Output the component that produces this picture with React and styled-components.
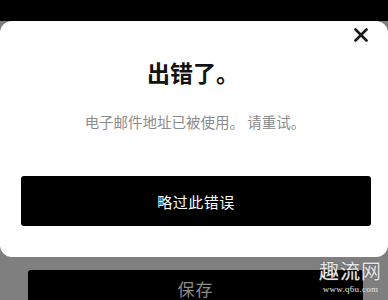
import React from 'react'
import styled, { createGlobalStyle } from 'styled-components'

const GlobalStyle = createGlobalStyle`
  html, body {
    margin: 0;
    padding: 0;
    background: #7f7f7f;
  }
  body {
    font-family: "Noto Sans CJK SC", "Noto Sans", sans-serif;
  }
`

const Page = styled.div`
  position: relative;
  width: 388px;
  height: 300px;
  overflow: hidden;
  background: #7f7f7f;
  display: flex;
  flex-direction: column;
`

const TopStrip = styled.div`
  height: 21px;
  background: #000;
  flex-shrink: 0;
`

const Modal = styled.div`
  background: #fff;
  border-radius: 12px;
  padding: 4px 17px 31px 21px;
  display: flex;
  flex-direction: column;
  align-items: stretch;
  flex-shrink: 0;
`

const CloseRow = styled.div`
  display: flex;
  justify-content: flex-end;
  height: 20px;
`

const CloseButton = styled.button`
  width: 20px;
  height: 20px;
  padding: 0;
  border: none;
  background: transparent;
  display: flex;
  align-items: center;
  justify-content: center;
`

const Title = styled.h2`
  margin: 12px 0 0;
  font-size: 23px;
  line-height: 30px;
  font-weight: 700;
  color: #111;
  text-align: center;
  padding-right: 6px;
`

const Message = styled.p`
  margin: 25px 0 0;
  font-size: 14.5px;
  line-height: 20px;
  color: #8c8c8c;
  text-align: center;
  padding-right: 2px;
`

const PrimaryButton = styled.button`
  margin-top: 44px;
  height: 50px;
  border: none;
  border-radius: 3px;
  background: #000;
  color: #fff;
  font-family: inherit;
  font-size: 15px;
  letter-spacing: 0.5px;
`

const Footer = styled.div`
  padding: 13px 25px 0 28px;
`

const SaveButton = styled.button`
  width: 100%;
  height: 40px;
  padding: 0 0 3px;
  border: none;
  border-radius: 3px;
  background: #000;
  color: #8a8a8a;
  font-family: inherit;
  font-size: 17px;
  line-height: 22px;
  letter-spacing: 1px;
`

const Watermark = styled.div`
  position: absolute;
  right: 6px;
  bottom: 6px;
  display: flex;
  flex-direction: column;
  align-items: center;
  gap: 3px;
  color: #e6e6e6;
  pointer-events: none;
`

const MarkName = styled.span`
  font-size: 20px;
  line-height: 22px;
  letter-spacing: 1px;
  text-shadow: 0 0 1px #555, 0 0 1px #555;
`

const MarkUrl = styled.span`
  font-family: "Liberation Serif", serif;
  font-size: 9px;
  line-height: 9px;
  letter-spacing: 0.3px;
`

const CloseIcon = () => (
  <svg width="14" height="14" viewBox="0 0 14 14">
    <path d="M1.5 1.5 L12.5 12.5 M12.5 1.5 L1.5 12.5" stroke="#1a1a1a" strokeWidth="2.6" strokeLinecap="round" />
  </svg>
)

const App = () => {
  return (
    <>
      <GlobalStyle />
      <Page>
        <TopStrip />
        <Modal>
          <CloseRow>
            <CloseButton aria-label="close">
              <CloseIcon />
            </CloseButton>
          </CloseRow>
          <Title>出错了。</Title>
          <Message>电子邮件地址已被使用。 请重试。</Message>
          <PrimaryButton>略过此错误</PrimaryButton>
        </Modal>
        <Footer>
          <SaveButton>保存</SaveButton>
        </Footer>
        <Watermark>
          <MarkName>趣流网</MarkName>
          <MarkUrl>www.q6u.com</MarkUrl>
        </Watermark>
      </Page>
    </>
  )
}

export default App
